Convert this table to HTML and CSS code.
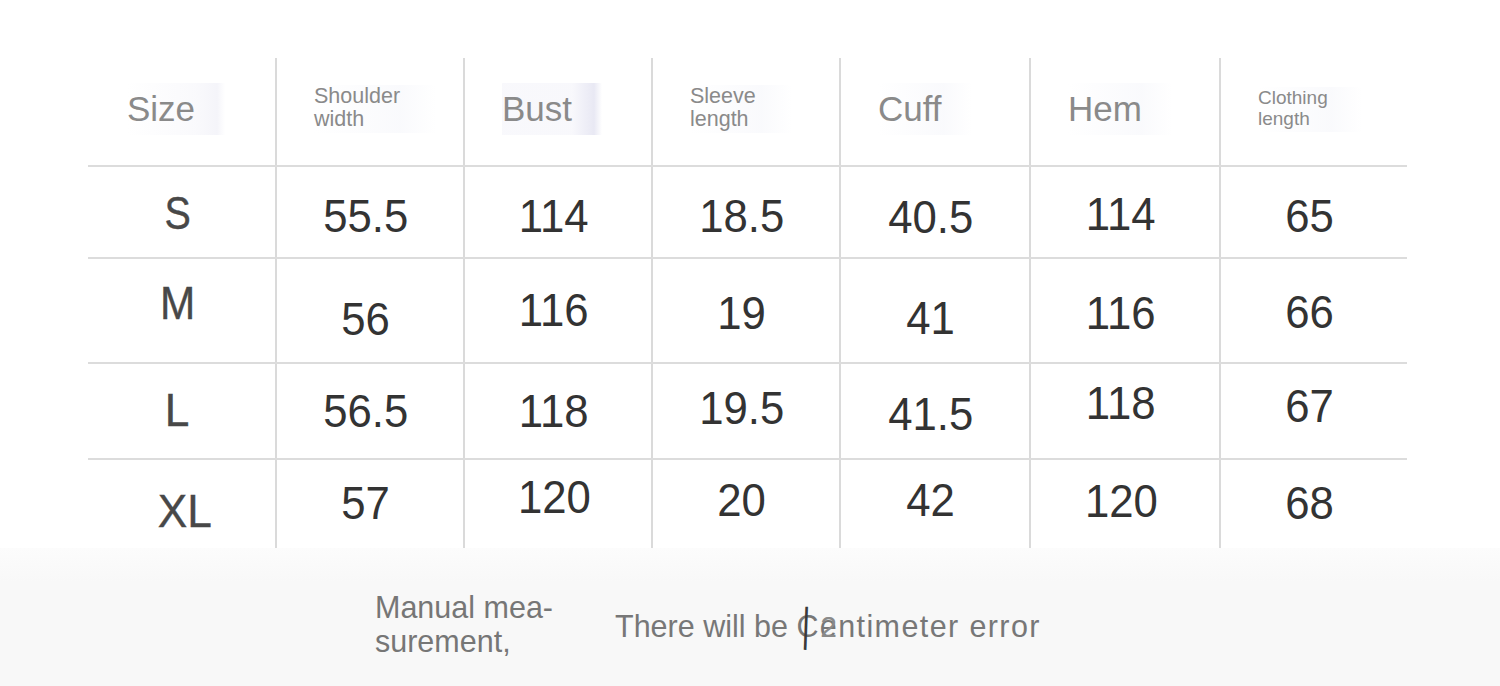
FILE: index.html
```html
<!DOCTYPE html>
<html lang="en">
<head>
<meta charset="utf-8">
<title>Size chart</title>
<link rel="stylesheet" href="styles.css">
</head>
<body>
<div class="sheet">
  <div class="chart">
    <div class="row head">
      <div class="cell"><span class="lab big smudge">Size</span></div>
      <div class="cell"><span class="lab small smudge-soft">Shoulder<br>width</span></div>
      <div class="cell"><span class="lab big smudge-violet">Bust</span></div>
      <div class="cell"><span class="lab small smudge-soft">Sleeve<br>length</span></div>
      <div class="cell"><span class="lab big smudge-soft">Cuff</span></div>
      <div class="cell"><span class="lab big smudge-soft">Hem</span></div>
      <div class="cell"><span class="lab tiny smudge-soft">Clothing<br>length</span></div>
    </div>
    <div class="row r-s">
      <div class="cell sz"><span class="v s-narrow">S</span></div>
      <div class="cell num"><span class="v d4">55.5</span></div>
      <div class="cell num"><span class="v d4">114</span></div>
      <div class="cell num"><span class="v d4">18.5</span></div>
      <div class="cell num"><span class="v d5">40.5</span></div>
      <div class="cell num"><span class="v d2">114</span></div>
      <div class="cell num"><span class="v d4">65</span></div>
    </div>
    <div class="row r-m">
      <div class="cell sz"><span class="v u8 m-narrow">M</span></div>
      <div class="cell num"><span class="v d8">56</span></div>
      <div class="cell num"><span class="v u1">116</span></div>
      <div class="cell num"><span class="v d2">19</span></div>
      <div class="cell num"><span class="v d7">41</span></div>
      <div class="cell num"><span class="v d2">116</span></div>
      <div class="cell num"><span class="v d1">66</span></div>
    </div>
    <div class="row r-l">
      <div class="cell sz"><span class="v u2">L</span></div>
      <div class="cell num"><span class="v">56.5</span></div>
      <div class="cell num"><span class="v">118</span></div>
      <div class="cell num"><span class="v u3">19.5</span></div>
      <div class="cell num"><span class="v d3">41.5</span></div>
      <div class="cell num"><span class="v u8">118</span></div>
      <div class="cell num"><span class="v u5">67</span></div>
    </div>
    <div class="row r-xl">
      <div class="cell sz"><span class="v d6 xl">XL</span></div>
      <div class="cell num"><span class="v u1">57</span></div>
      <div class="cell num"><span class="v u7">120</span></div>
      <div class="cell num"><span class="v u4">20</span></div>
      <div class="cell num"><span class="v u4">42</span></div>
      <div class="cell num"><span class="v u3">120</span></div>
      <div class="cell num"><span class="v u1">68</span></div>
    </div>
  </div>
  <div class="note">
    <div class="note-left">Manual mea-<br>surement,</div>
    <div class="note-right">There will be <span class="cm"><span class="glitch"><span class="bar">|</span><span class="two">2</span></span>Centimeter error</span></div>
  </div>
</div>
</body>
</html>
```
FILE: styles.css
```css
html, body {
  margin: 0;
  padding: 0;
  background: #ffffff;
}

body {
  font-family: "Liberation Sans", Arial, sans-serif;
  width: 1500px;
  height: 686px;
  overflow: hidden;
}

.sheet {
  width: 1500px;
  height: 686px;
  display: flex;
  flex-direction: column;
}

.chart {
  height: 548px;
  box-sizing: border-box;
  padding: 58px 0 0 88px;
  background: #ffffff;
}

.row {
  display: grid;
  grid-template-columns: 187px 188px 188px 188px 190px 190px 188px;
  width: 1319px;
  box-sizing: border-box;
}

.row + .row {
  border-top: 2px solid #dcdcdc;
}

.head { height: 107px; }
.r-s { height: 92px; }
.r-m { height: 105px; }
.r-l { height: 96px; }
.r-xl { height: 90px; }

.cell {
  display: flex;
  align-items: center;
  box-sizing: border-box;
}

.cell + .cell {
  border-left: 2px solid #dadada;
}

.head .cell {
  padding: 0 0 5px 39px;
}

.head .cell + .cell {
  padding-left: 37px;
}

.lab {
  color: #8a8a8a;
  display: inline-block;
}

.big {
  font-size: 35px;
  line-height: 40px;
  padding: 6px 30px 6px 0;
}

.small {
  font-size: 21.5px;
  line-height: 23px;
  padding: 0 36px 2px 0;
}

.tiny {
  font-size: 19px;
  line-height: 21px;
  padding: 0 34px 3px 0;
}

.smudge {
  background: linear-gradient(90deg, rgba(246,246,250,0) 0%, rgba(243,243,249,0.45) 70%, rgba(225,225,240,0.35) 92%, rgba(255,255,255,0) 100%);
}

.smudge-soft {
  background: linear-gradient(90deg, rgba(248,248,252,0) 0%, rgba(244,245,250,0.5) 70%, rgba(255,255,255,0) 100%);
}

.smudge-violet {
  background: linear-gradient(90deg, rgba(236,236,246,0.35) 0%, rgba(240,240,248,0.45) 70%, rgba(205,205,230,0.45) 92%, rgba(255,255,255,0) 100%);
}

.num, .sz {
  justify-content: center;
  padding-right: 8px;
}

.v {
  display: inline-block;
  --dy: 0px;
  --sx: 0.95;
  transform: translateY(var(--dy)) scaleX(var(--sx));
  line-height: 1;
}

.num .v {
  font-size: 46px;
  color: #333333;
}

.sz .v {
  font-size: 47px;
  color: #484848;
  --sx: 0.94;
  -webkit-text-stroke: 0.4px #484848;
}

.sz .s-narrow {
  --sx: 0.84;
}

.sz .m-narrow {
  --sx: 0.9;
}

.sz .xl {
  --sx: 0.94;
  margin-left: 14px;
}

.d1 { --dy: 1px; }
.d2 { --dy: 2px; }
.d3 { --dy: 3px; }
.d4 { --dy: 4px; }
.d5 { --dy: 5px; }
.d6 { --dy: 6px; }
.d7 { --dy: 7px; }
.d8 { --dy: 8px; }
.u1 { --dy: -1px; }
.u2 { --dy: -2px; }
.u3 { --dy: -3px; }
.u4 { --dy: -4px; }
.u5 { --dy: -5px; }
.u7 { --dy: -7px; }
.u8 { --dy: -8px; }

.note {
  flex: 1;
  background: linear-gradient(180deg, #fcfcfc 0%, #f8f8f8 25%, #f8f8f8 100%);
  display: flex;
  align-items: flex-start;
  padding: 42px 0 0 375px;
  box-sizing: border-box;
}

.note-left {
  width: 240px;
  font-size: 30.5px;
  line-height: 34px;
  color: #767676;
}

.note-right {
  margin-top: 19px;
  font-size: 30.5px;
  line-height: 34px;
  color: #777777;
  white-space: nowrap;
}

.cm {
  position: relative;
  letter-spacing: 1.4px;
}

.glitch {
  position: absolute;
  left: 4px;
  top: -8px;
  letter-spacing: 0;
  line-height: 1;
  white-space: nowrap;
}

.bar {
  font-size: 46px;
  color: #3a3a3a;
  display: inline-block;
  transform: scaleX(0.7) rotate(3deg);
}

.two {
  font-size: 30px;
  color: #8a8a8a;
  margin-left: 8px;
  vertical-align: 3px;
}
```
